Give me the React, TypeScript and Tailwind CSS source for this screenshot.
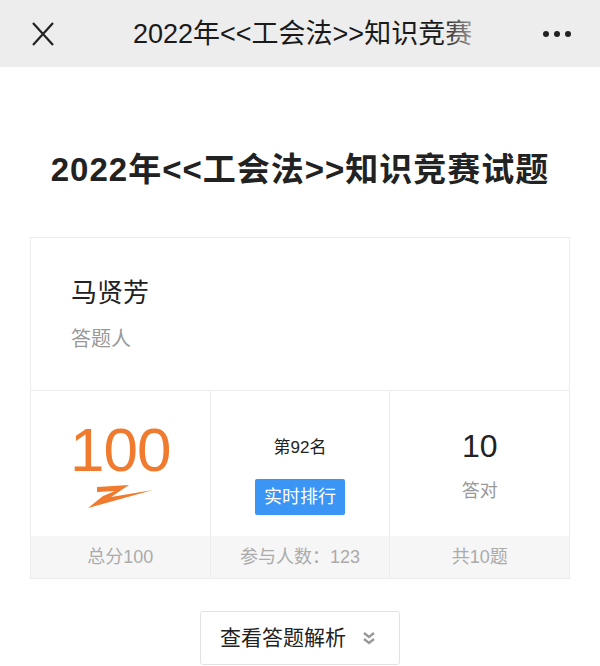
import React from 'react';

const font = { fontFamily: '"Liberation Sans", "Noto Sans CJK SC", "Noto Sans", sans-serif' };

function Swoosh() {
  return (
    <svg width="70" height="25" viewBox="0 0 70 25">
      <path d="M12 3 L44 1 L26 13 L68 6 L3 24 L18 12 L30 7 L12 8 Z" fill="#f07a2e" />
    </svg>
  );
}

function StatCell({ children, footer, last }: { children: React.ReactNode; footer: string; last?: boolean }) {
  return (
    <div className={`flex flex-1 flex-col ${last ? '' : 'border-r border-[#ececec]'}`}>
      <div className="flex h-[145px] flex-col items-center">{children}</div>
      <div className="flex h-[42px] items-center justify-center bg-[#f6f6f6] text-[18px] text-[#ababab]">{footer}</div>
    </div>
  );
}

export default function App() {
  return (
    <div className="min-h-[666px] w-[600px] overflow-hidden bg-white" style={font}>
      {/* top bar */}
      <div className="flex h-[67px] items-center bg-[#ededed] pl-[29px] pr-[29px]">
        <svg width="28" height="28" viewBox="0 0 28 28" className="shrink-0">
          <path d="M4 3 L24 25 M24 3 L4 25" stroke="#222" strokeWidth="2.2" fill="none" />
        </svg>
        <div className="flex-1 whitespace-nowrap pl-[76px] text-[27px] leading-[36px] text-[#1a1a1a]">
          <span className="relative inline-block">
            2022年&lt;&lt;工会法&gt;&gt;知识竞赛
            <span className="absolute right-0 top-0 h-full w-[30px] bg-gradient-to-r from-[#ededed00] to-[#ededed99]" />
          </span>
        </div>
        <div className="flex shrink-0 gap-[5px]">
          <span className="h-[6px] w-[6px] rounded-full bg-[#222]" />
          <span className="h-[6px] w-[6px] rounded-full bg-[#222]" />
          <span className="h-[6px] w-[6px] rounded-full bg-[#222]" />
        </div>
      </div>

      {/* heading */}
      <h1 className="pt-[79px] pb-[43px] text-center text-[33px] font-bold leading-[48px] tracking-[1px] text-[#222]">
        2022年&lt;&lt;工会法&gt;&gt;知识竞赛试题
      </h1>

      {/* card */}
      <div className="mx-[30px] border border-[#ececec]">
        <div className="h-[153px] border-b border-[#ececec] pl-[40px] pt-[37px]">
          <div className="text-[26px] leading-[36px] text-[#222]">马贤芳</div>
          <div className="mt-[14px] text-[20px] leading-[28px] text-[#999]">答题人</div>
        </div>
        <div className="flex">
          <StatCell footer="总分100">
            <div className="pt-[28px] text-[62px] leading-[62px] tracking-[-1px] text-[#f07a2e]">100</div>
            <div className="mt-[3px]">
              <Swoosh />
            </div>
          </StatCell>
          <StatCell footer="参与人数：123">
            <div className="pt-[45px] text-[17px] leading-[24px] text-[#222]">第92名</div>
            <div className="mt-[19px] flex h-[36px] w-[90px] items-center justify-center rounded-[2px] bg-[#3b95f4] text-[18px] text-white">
              实时排行
            </div>
          </StatCell>
          <StatCell footer="共10题" last>
            <div className="pt-[35px] text-[32px] leading-[40px] text-[#222]">10</div>
            <div className="mt-[12px] text-[18px] leading-[26px] text-[#999]">答对</div>
          </StatCell>
        </div>
      </div>

      {/* analysis button */}
      <div className="flex justify-center pt-[32px]">
        <div className="flex h-[54px] w-[200px] items-center justify-center gap-[16px] rounded-[3px] border border-[#e2e2e2] pr-[4px] text-[21px] text-[#222]">
          查看答题解析
          <svg width="14" height="15" viewBox="0 0 14 15">
            <path d="M2 2 L7 6 L12 2 M2 8 L7 12 L12 8" stroke="#999" strokeWidth="2.4" fill="none" />
          </svg>
        </div>
      </div>
    </div>
  );
}
